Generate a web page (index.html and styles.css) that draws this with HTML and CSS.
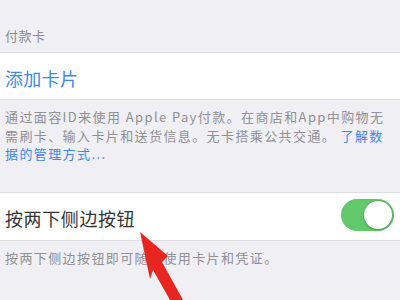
FILE: index.html
```html
<!DOCTYPE html>
<html lang="zh-CN">
<head>
    <meta charset="UTF-8">
    <meta name="viewport" content="width=device-width, initial-scale=1.0">
    <title>钱包与 Apple Pay</title>
    <link rel="stylesheet" href="styles.css">
</head>
<body>
    <div class="page">
        <!-- 付款卡 -->
        <div class="group-header">付款卡</div>
        <div class="cell">
            <a href="#" class="cell-link">添加卡片</a>
        </div>
        <div class="group-footer">
            通过面容ID来使用 Apple Pay付款。在商店和App中购物无<br>
            需刷卡、输入卡片和送货信息。无卡搭乘公共交通。 <a href="#" class="footer-link">了解数<br>据的管理方式...</a>
        </div>

        <!-- 侧边按钮 -->
        <div class="cell cell-switch">
            <span class="cell-title">按两下侧边按钮</span>
            <span class="switch on"><span class="knob"></span></span>
        </div>
        <div class="group-footer">
            按两下侧边按钮即可随时使用卡片和凭证。
        </div>

        <!-- 标注箭头 -->
        <svg class="arrow" width="400" height="300" viewBox="0 0 400 300">
            <polygon points="140,232 168,256 162,262 183,300 170,300 153,270 150,279" fill="#e8261f"/>
        </svg>
    </div>
</body>
</html>
```

FILE: styles.css
```css
* {
    margin: 0;
    padding: 0;
    box-sizing: border-box;
}

body {
    font-family: "Noto Sans CJK SC", "Noto Sans", sans-serif;
    background: #efeff4;
    width: 400px;
    height: 300px;
    overflow: hidden;
}

.page {
    position: relative;
    height: 300px;
}

.group-header {
    font-size: 13px;
    line-height: 18px;
    color: #8a8a8f;
    padding: 27px 5px 7px;
    letter-spacing: 0.5px;
}

.cell {
    background: white;
    border-top: 1px solid #dedee2;
    border-bottom: 1px solid #dedee2;
    height: 48px;
    padding: 0 5px;
    display: flex;
    align-items: center;
}

.cell-link {
    font-size: 18px;
    color: #3d87ee;
    text-decoration: none;
    letter-spacing: 0.3px;
    padding-top: 3px;
}

.group-footer {
    font-size: 13px;
    line-height: 18.5px;
    color: #909095;
    padding: 8px 5px 0;
    letter-spacing: 1.4px;
    white-space: nowrap;
}

.footer-link {
    color: #3d87ee;
    text-decoration: none;
}

.cell-switch {
    margin-top: 28px;
    height: 49px;
    justify-content: space-between;
    padding-right: 6px;
}

.cell-title {
    font-size: 18px;
    color: #343436;
    letter-spacing: 0.6px;
    padding-top: 4px;
}

.switch {
    width: 53px;
    height: 32px;
    border-radius: 16px;
    background: #e5e5ea;
    display: flex;
    align-items: center;
    padding: 2px;
    margin-top: -3px;
}

.switch.on {
    background: #62c96b;
    justify-content: flex-end;
}

.knob {
    width: 28px;
    height: 28px;
    border-radius: 50%;
    background: white;
    box-shadow: 0 0 0 1px rgba(0, 0, 0, 0.12), 0 2px 3px rgba(0, 0, 0, 0.12);
}

.arrow {
    position: absolute;
    left: 0;
    top: 0;
    pointer-events: none;
}
```
